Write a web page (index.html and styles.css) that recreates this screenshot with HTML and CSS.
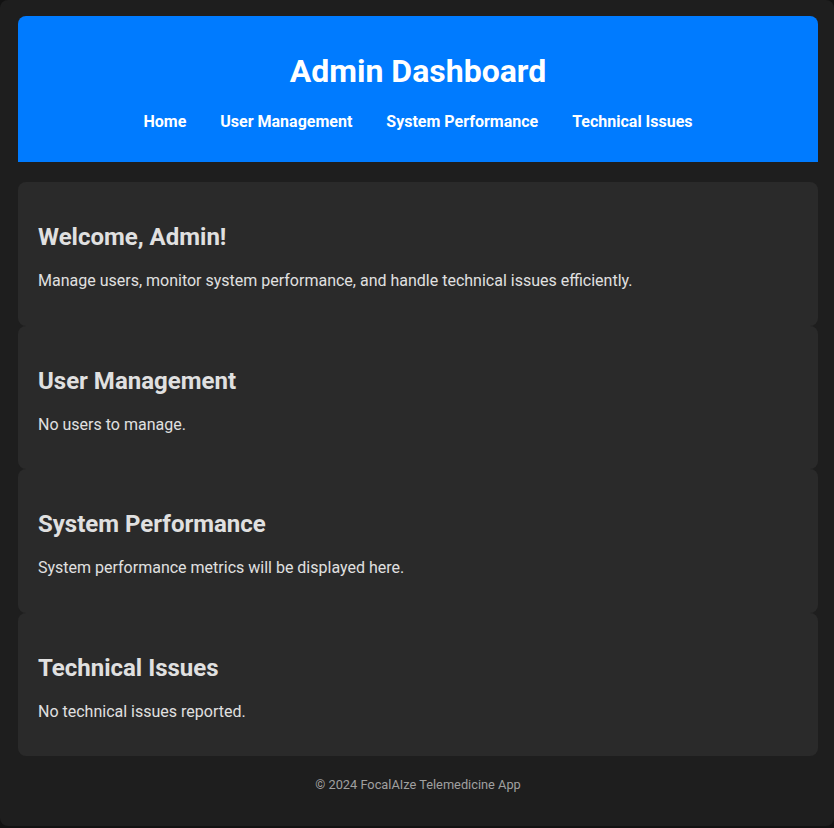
FILE: index.html
```html
<!DOCTYPE html>
<html lang="en">
<head>
<meta charset="utf-8">
<title>Admin Dashboard</title>
<link rel="stylesheet" href="styles.css">
</head>
<body>
<div class="app">
  <header class="header">
    <h1 class="title">Admin Dashboard</h1>
    <nav class="nav">
      <a href="#">Home</a>
      <a href="#">User Management</a>
      <a href="#">System Performance</a>
      <a href="#">Technical Issues</a>
    </nav>
  </header>
  <main class="main">
    <section class="card">
      <h2>Welcome, Admin!</h2>
      <p>Manage users, monitor system performance, and handle technical issues efficiently.</p>
    </section>
    <section class="card">
      <h2>User Management</h2>
      <p>No users to manage.</p>
    </section>
    <section class="card">
      <h2>System Performance</h2>
      <p>System performance metrics will be displayed here.</p>
    </section>
    <section class="card">
      <h2>Technical Issues</h2>
      <p>No technical issues reported.</p>
    </section>
  </main>
  <footer class="footer">© 2024 FocalAIze Telemedicine App</footer>
</div>
</body>
</html>
```

FILE: styles.css
```css
html, body {
  margin: 0;
  padding: 0;
  background: #121212;
  font-family: Roboto, "Liberation Sans", sans-serif;
  color: #e0e0e0;
}
.app {
  background: #1e1e1e;
  border-radius: 8px;
  padding: 16px 16px 0 18px;
  height: 810px;
}
.header {
  background: #007bff;
  border-radius: 8px 8px 0 0;
  padding: 37px 20px 31px;
  text-align: center;
  color: #fff;
}
.title {
  margin: 0;
  font-size: 32px;
  font-weight: 700;
  line-height: 37px;
}
.nav {
  margin-top: 22px;
  display: flex;
  justify-content: center;
  gap: 34px;
}
.nav a {
  color: #fff;
  text-decoration: none;
  font-weight: 700;
  font-size: 16px;
  line-height: 19px;
}
.main {
  margin-top: 20px;
}
.card {
  background: #2a2a2a;
  border-radius: 8px;
  padding: 20px;
}
.card h2 {
  margin: 21px 0 19.5px;
  font-size: 24px;
  line-height: 28.5px;
  font-weight: 700;
}
.card p {
  margin: 0 0 15.5px;
  font-size: 16px;
  line-height: 19px;
}
.footer {
  text-align: center;
  font-size: 12.8px;
  line-height: 16px;
  color: #a0a0a0;
  padding: 21px 0 20px;
}
```
